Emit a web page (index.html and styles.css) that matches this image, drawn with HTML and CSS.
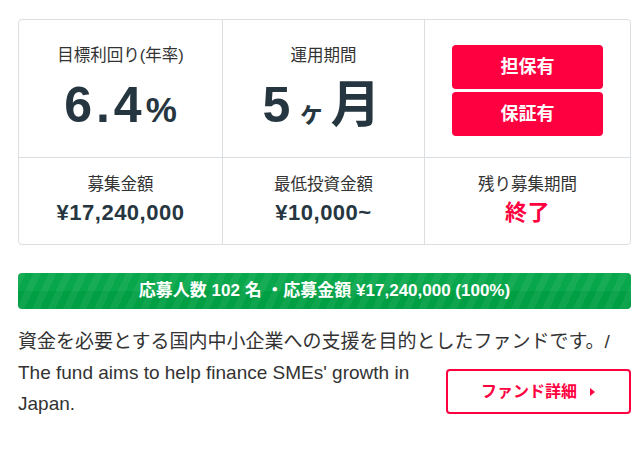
FILE: index.html
```html
<!DOCTYPE html>
<html lang="ja">
<head>
<meta charset="utf-8">
<link rel="stylesheet" href="styles.css">
</head>
<body>
<div class="fund">
  <div class="card">
    <div class="cell top">
      <div class="label">目標利回り(年率)</div>
      <div class="big">6.4<span class="unit">%</span></div>
    </div>
    <div class="cell top">
      <div class="label">運用期間</div>
      <div class="big">5<span class="ke">ヶ</span>月</div>
    </div>
    <div class="cell badges">
      <div class="badge">担保有</div>
      <div class="badge">保証有</div>
    </div>
    <div class="cell bottom">
      <div class="label">募集金額</div>
      <div class="value">¥17,240,000</div>
    </div>
    <div class="cell bottom">
      <div class="label">最低投資金額</div>
      <div class="value">¥10,000~</div>
    </div>
    <div class="cell bottom">
      <div class="label">残り募集期間</div>
      <div class="value red">終了</div>
    </div>
  </div>
  <div class="progress">応募人数 102 名 ・応募金額 ¥17,240,000 (100%)</div>
  <p class="desc">資金を必要とする国内中小企業への支援を目的としたファンドです。/ <a class="detail" href="#">ファンド詳細<svg class="arrow" width="7" height="10" viewBox="0 0 7 10"><path d="M1 1 L6 5 L1 9 Z" fill="#fe0040"/></svg></a>The fund aims to help finance SMEs' growth in Japan.</p>
</div>
</body>
</html>
```
FILE: styles.css
```css
* { box-sizing: border-box; }
body {
  margin: 0;
  background: #fff;
  font-family: "Liberation Sans", "Noto Sans CJK JP", sans-serif;
  color: #333;
}
.fund {
  width: 613px;
  margin: 19px 0 0 18px;
}
.card {
  display: grid;
  grid-template-columns: 204px 202px 1fr;
  grid-template-rows: 138px 86px;
  border: 1px solid #dcdfe1;
  border-radius: 4px;
}
.cell {
  display: flex;
  flex-direction: column;
  align-items: center;
  border-right: 1px solid #dcdfe1;
}
.cell:nth-child(3n) { border-right: none; }
.cell.top, .cell.badges { border-bottom: 1px solid #dcdfe1; }
.label {
  font-size: 16.5px;
  line-height: 24px;
  color: #333;
}
.top { padding-top: 23px; }
.big {
  margin-top: 13px;
  font-size: 50px;
  line-height: 50px;
  font-weight: bold;
  color: #263640;
  letter-spacing: 4px;
}
.unit { font-size: 35px; letter-spacing: 0; }
.ke { font-size: 26px; margin: 0 6px 0 4px; letter-spacing: 0; }
.badges {
  padding-top: 25px;
  gap: 3px;
}
.badge {
  width: 151px;
  height: 44px;
  background: #fe0040;
  color: #fff;
  border-radius: 4px;
  font-size: 18px;
  font-weight: bold;
  line-height: 44px;
  text-align: center;
}
.bottom { padding-top: 14px; }
.value {
  margin-top: 3px;
  font-size: 22px;
  line-height: 28px;
  font-weight: bold;
  color: #263640;
  letter-spacing: 0.5px;
}
.value.red { color: #fe0040; }
.progress {
  margin-top: 28px;
  height: 36px;
  border-radius: 4px;
  background:
    linear-gradient(to bottom, rgba(255,255,255,0.03) 0, rgba(255,255,255,0.03) 50%, rgba(0,0,0,0.03) 50%, rgba(0,0,0,0.03) 100%),
    repeating-linear-gradient(115deg, rgba(255,255,255,0.06) 0 7px, rgba(255,255,255,0) 7px 14px),
    #00a445;
  color: #fff;
  font-size: 17px;
  font-weight: bold;
  line-height: 36px;
  text-align: center;
}
.desc {
  margin: 17px 0 0;
  font-size: 19px;
  line-height: 31px;
  color: #333;
}
.detail {
  float: right;
  margin-top: 12px;
  margin-left: 16px;
  width: 185px;
  height: 45px;
  border: 2px solid #fe0040;
  border-radius: 4px;
  color: #fe0040;
  font-size: 16px;
  font-weight: bold;
  text-decoration: none;
  display: flex;
  align-items: center;
  justify-content: center;
  gap: 12px;
  line-height: 1;
}
.arrow { display: block; }
```
